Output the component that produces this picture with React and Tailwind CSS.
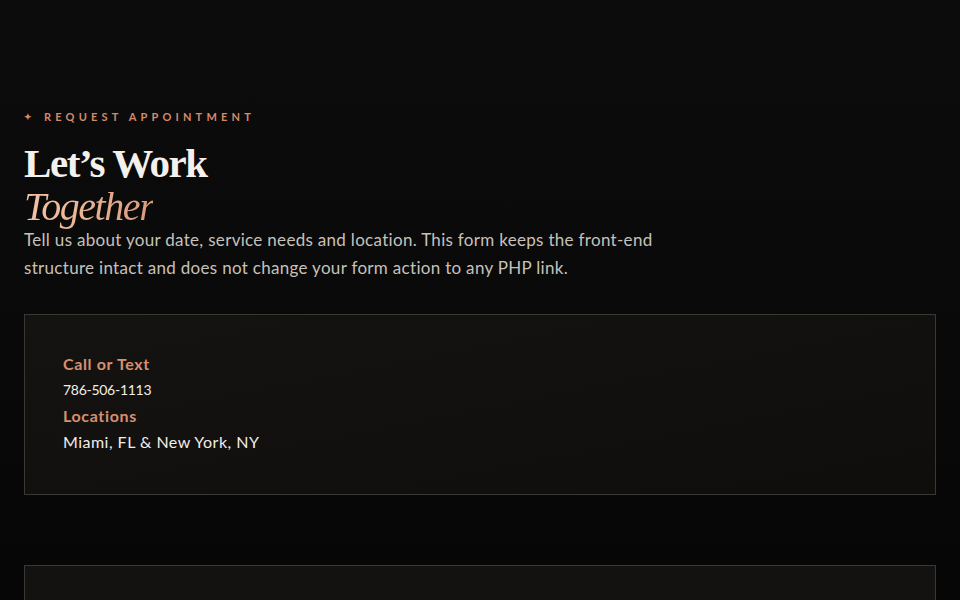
import React from "react";

const sans = { fontFamily: '"Lato", "Open Sans", sans-serif' };

const ContactCard = () => (
  <div className="mt-[32px] h-[181px] border border-[#3a3834] bg-gradient-to-br from-[#151312] to-[#0f0e0d] px-[38px] pt-[37px]">
    <h3 className="text-[16px] leading-[24px] font-bold tracking-[0.04em] text-[#d6906f]">Call or Text</h3>
    <p className="text-[14px] leading-[28px] tracking-[-0.02em] text-[#f1ede8]">786-506-1113</p>
    <h3 className="text-[16px] leading-[24px] font-bold tracking-[0.04em] text-[#d6906f]">Locations</h3>
    <p className="text-[16px] leading-[27px] tracking-[0.03em] text-[#f1ede8]">Miami, FL &amp; New York, NY</p>
  </div>
);

export default function App() {
  return (
    <div className="min-h-screen bg-gradient-to-b from-[#0c0c0c] via-[#090909] to-[#050505] text-white" style={sans}>
      <section className="px-6 pt-[108px] pb-10">
        {/* Eyebrow */}
        <p className="flex items-center gap-[12px] text-[11px] leading-[18px] font-bold tracking-[0.38em] text-[#d48a6b]">
          <span className="text-[9px] tracking-normal">✦</span>
          REQUEST APPOINTMENT
        </p>

        <h1
          className="mt-[16px] text-[41px] leading-[43px] font-bold tracking-[-0.035em] text-[#f4f1ec]"
          style={{ fontFamily: '"Liberation Serif", "DejaVu Serif", serif' }}
        >
          Let’s Work
          <br />
          <span className="italic font-normal text-[40px] bg-gradient-to-r from-[#f3c3a6] via-[#eab393] to-[#d99a7a] bg-clip-text text-transparent">
            Together
          </span>
        </h1>

        <p className="-mt-[2px] max-w-[680px] text-[17px] leading-[28px] tracking-[0.018em] text-[#c7c1ba]">
          Tell us about your date, service needs and location. This form keeps the front-end
          structure intact and does not change your form action to any PHP link.
        </p>

        <ContactCard />

        <div className="mt-[70px] h-[120px] border border-[#3a3834] bg-[#131210]"></div>
      </section>
    </div>
  );
}
